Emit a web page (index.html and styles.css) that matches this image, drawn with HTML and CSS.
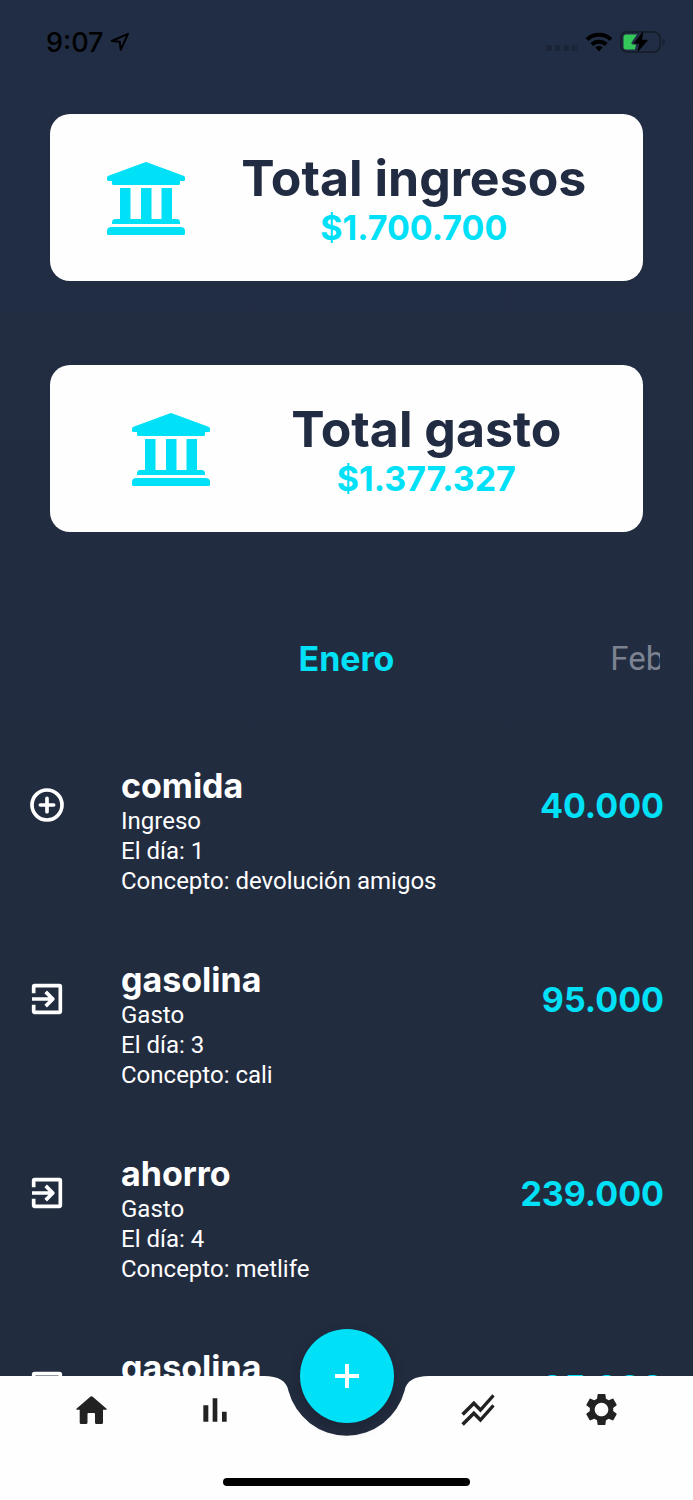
FILE: index.html
```html
<!DOCTYPE html>
<html lang="es">
<head>
<meta charset="utf-8">
<meta name="viewport" content="width=device-width, initial-scale=1">
<title>Finanzas</title>
<link rel="stylesheet" href="styles.css">
</head>
<body>
<svg class="defs" aria-hidden="true">
  <symbol id="bank" viewBox="0 0 78 73">
    <path d="M37.5.4a4 4 0 0 1 3 0L76.500 13.800Q78 14.400 78 16V17.500Q78 19 76.500 19H73V21.500Q73 23 71.500 23H6.500Q5 23 5 21.500V19H1.500Q0 19 0 17.500V16Q0 14.400 1.500 13.800Z"/>
    <path d="M13 26H23.500V57H34V26H44.500V57H54.500V26H65V57H70.500Q73 57.500 73 60V62H5V60Q5 57.500 7.500 57H13Z"/>
    <path d="M3.500 65H74.500Q78 65.500 78 69V71.500Q78 73 76.500 73H1.500Q0 73 0 71.500V69Q0 65.500 3.500 65Z"/>
  </symbol>
  <symbol id="exit" viewBox="0 0 24 24">
    <path fill="none" stroke="currentColor" stroke-width="2.200" stroke-linejoin="round" d="M4 8.500V4.600Q4 4 4.600 4H19.400Q20 4 20 4.600V19.400Q20 20 19.400 20H4.600Q4 20 4 19.400V15.500M3 12H15M11.200 7.700L15.500 12L11.200 16.300"/>
  </symbol>
</svg>
<div class="app">
  <header class="status">
    <div class="status-left">
      <span>9:07</span>
      <svg width="20" height="20" viewBox="0 0 20 20"><path fill="none" stroke="#000" stroke-width="2" stroke-linejoin="round" d="M1.800 9L18 1.800L10.700 17.800L9.800 9.800Z"/></svg>
    </div>
    <div class="status-right">
      <svg width="32" height="22" viewBox="0 0 32 22" fill="#1b2436"><rect y="14" width="6" height="6" rx="2"/><rect x="8.500" y="14" width="6" height="6" rx="2"/><rect x="17" y="14" width="6" height="6" rx="2"/><rect x="25.500" y="14" width="6" height="6" rx="2"/></svg>
      <svg width="28" height="22" viewBox="0 0 28 22"><g fill="none" stroke="#000" stroke-width="4"><path d="M2 8.500A17.500 17.500 0 0 1 26 8.500"/><path d="M6.700 13.500A10.800 10.800 0 0 1 21.300 13.500"/></g><path d="M10.300 16.500Q14 13.700 17.700 16.500L14 20.600Z"/></svg>
      <svg width="46" height="22" viewBox="0 0 46 22"><rect x="1" y="1" width="39" height="20" rx="6" fill="none" stroke="#171f2f" stroke-width="2"/><path fill="#171f2f" d="M42.500 7.500Q45 8.500 45 11T42.500 14.500Z"/><path fill="#34c759" d="M6 3.500H17L11.500 11.500Q11 13.500 13 13.500H16L15 18.500H6Q3.500 18.500 3.500 16V6Q3.500 3.500 6 3.500Z"/><path d="M23.500 0L14 11.800Q13.500 12.700 14.500 12.700H19.300L17.300 21.500L27.500 9.700Q28 8.700 27 8.700H22Z"/></svg>
    </div>
  </header>

  <section class="totals">
    <article class="card">
      <svg class="bank"><use href="#bank"/></svg>
      <div class="card-text"><h2>Total ingresos</h2><p>$1.700.700</p></div>
    </article>
    <article class="card">
      <svg class="bank"><use href="#bank"/></svg>
      <div class="card-text"><h2>Total gasto</h2><p>$1.377.327</p></div>
    </article>
  </section>

  <div class="months">
    <button class="month active" type="button">Enero</button>
    <button class="month" type="button">Febrero</button>
  </div>

  <ul class="list">
    <li class="row">
      <div class="row-icon"><svg viewBox="0 0 24 24"><g fill="none" stroke="currentColor" stroke-width="2.200"><circle cx="12" cy="12" r="9"/><path stroke-linecap="round" d="M12 8V16M8 12H16"/></g></svg></div>
      <div class="detail"><h3>comida</h3><p>Ingreso</p><p>El día: 1</p><p>Concepto: devolución amigos</p></div>
      <span class="amount">40.000</span>
    </li>
    <li class="row">
      <div class="row-icon"><svg><use href="#exit"/></svg></div>
      <div class="detail"><h3>gasolina</h3><p>Gasto</p><p>El día: 3</p><p>Concepto: cali</p></div>
      <span class="amount">95.000</span>
    </li>
    <li class="row">
      <div class="row-icon"><svg><use href="#exit"/></svg></div>
      <div class="detail"><h3>ahorro</h3><p>Gasto</p><p>El día: 4</p><p>Concepto: metlife</p></div>
      <span class="amount">239.000</span>
    </li>
    <li class="row">
      <div class="row-icon"><svg><use href="#exit"/></svg></div>
      <div class="detail"><h3>gasolina</h3></div>
      <span class="amount">95.000</span>
    </li>
  </ul>

  <nav class="nav">
    <div class="nav-bg">
      <div class="nav-side"></div>
      <svg class="notch" viewBox="0 0 181 124"><path fill="#fefefe" d="M0 0H8C22 0 31 5 32.500 15A60 60 0 0 0 148.500 15C150 5 159 0 173 0H181V124H0Z"/></svg>
      <div class="nav-side"></div>
    </div>
    <div class="tabs">
      <button type="button" aria-label="Inicio"><svg width="31" height="28" viewBox="0 0 31 28"><path d="M14.600.5Q15.500-.2 16.400.5L30.300 12.500Q31.300 13.800 30 13.800H27V26.500Q27 28 25.500 28H20.500Q19 28 19 26.500V18Q19 17 18 17H12.500Q11.500 17 11.500 18V26.500Q11.500 28 10 28H5Q3.700 28 3.700 26.500V13.800H1Q-.3 13.800.7 12.500Z"/></svg></button>
      <button type="button" aria-label="Estadísticas"><svg width="40" height="40" viewBox="0 0 24 24"><path d="M5 9.200h3V19H5zM10.600 5h2.800v14h-2.800zM16.200 13H19v6h-2.800z"/></svg></button>
      <button class="fab" type="button" aria-label="Agregar"><svg width="24" height="24" viewBox="0 0 24 24"><path fill="none" stroke="#fff" stroke-width="4" d="M12 0V24M0 12H24"/></svg></button>
      <button type="button" aria-label="Tendencias"><svg width="40" height="40" viewBox="0 0 24 24"><path d="M2 19.990l7.500-7.510 4 4 7.090-7.970L22 9.920l-8.500 9.560-4-4-6 6.010L2 19.990zm1.500-4.500l6-6.010 4 4L22 3.920l-1.410-1.410-7.090 7.970-4-4L2 13.990l1.500 1.500z"/></svg></button>
      <button type="button" aria-label="Ajustes"><svg width="39" height="39" viewBox="0 0 24 24"><path d="M19.140 12.940c.04-.3.060-.61.060-.94 0-.32-.02-.64-.07-.94l2.030-1.580c.18-.14.230-.41.120-.61l-1.920-3.320c-.12-.22-.37-.29-.59-.22l-2.390.96c-.5-.38-1.030-.7-1.620-.94l-.36-2.540c-.04-.24-.24-.41-.48-.41h-3.840c-.24 0-.43.170-.47.410l-.36 2.540c-.59.240-1.130.570-1.620.940l-2.390-.96c-.22-.08-.47 0-.59.220L2.740 8.870c-.12.210-.08.470.12.610l2.030 1.580c-.05.300-.09.630-.09.940s.02.640.07.940l-2.030 1.580c-.18.140-.23.410-.12.610l1.920 3.320c.12.220.37.290.59.220l2.390-.96c.5.380 1.030.7 1.620.94l.36 2.540c.05.240.24.410.48.410h3.840c.24 0 .44-.17.470-.41l.36-2.540c.59-.24 1.130-.56 1.620-.94l2.390.96c.22.080.47 0 .59-.22l1.920-3.320c.12-.22.070-.47-.12-.61l-2.010-1.580zM12 16.200c-2.310 0-4.200-1.890-4.200-4.200s1.890-4.200 4.200-4.200 4.200 1.890 4.200 4.200-1.890 4.200-4.200 4.200z"/></svg></button>
    </div>
    <div class="home-bar"></div>
  </nav>
</div>
</body>
</html>
```
FILE: styles.css
```css
* {
  box-sizing: border-box;
  margin: 0;
  padding: 0;
}

body {
  font-family: Inter, "Liberation Sans", sans-serif;
}

svg {
  display: block;
  flex: none;
}

button {
  border: 0;
  background: none;
  font: inherit;
  color: inherit;
  cursor: pointer;
}

.defs {
  position: absolute;
  width: 0;
  height: 0;
}

.app {
  position: relative;
  display: flex;
  flex-direction: column;
  height: 100vh;
  overflow: hidden;
  background: linear-gradient(#212d44, #222c3f 60%);
}

.status {
  flex: none;
  display: flex;
  align-items: center;
  justify-content: space-between;
  height: 84px;
  padding: 0 27px 0 46px;
  color: #000;
}

.status-left {
  display: flex;
  align-items: center;
  gap: 6px;
  font-size: 27px;
  font-weight: 500;
}

.status-right {
  display: flex;
  align-items: center;
  gap: 7px;
}

.totals {
  flex: none;
  display: flex;
  flex-direction: column;
  gap: 84px;
  padding: 30px 50px 0;
}

.card {
  display: flex;
  align-items: center;
  justify-content: space-evenly;
  padding: 35px 0 33px;
  border-radius: 20px;
  background: #fefefe;
}

.bank {
  width: 78px;
  height: 73px;
  fill: #00e0f7;
}

.card-text {
  text-align: center;
}

.card-text h2 {
  font-size: 50px;
  line-height: 59px;
  font-weight: 700;
  color: #212b41;
}

.card-text p {
  font-size: 34px;
  line-height: 40px;
  font-weight: 700;
  color: #00e0f7;
}

.months {
  flex: none;
  display: flex;
  margin: 96px 33px 77px;
  overflow: hidden;
}

.month {
  flex: 0 0 51%;
  height: 60px;
  font-family: Roboto, sans-serif;
  font-size: 33px;
  color: #7c8290;
}

.month.active {
  margin-left: calc(50% - 51% / 2);
  font-family: Inter, sans-serif;
  font-size: 34px;
  font-weight: 700;
  color: #00e0f7;
}

.list {
  flex: 1;
  min-height: 0;
  display: flex;
  flex-direction: column;
  gap: 63px;
  list-style: none;
  overflow: hidden;
}

.row {
  flex: none;
  display: flex;
  align-items: flex-start;
  padding: 0 29px 0 27px;
  color: #fff;
}

.row-icon {
  display: flex;
  align-items: center;
  height: 80px;
}

.row-icon svg {
  width: 40px;
  height: 40px;
}

.detail {
  flex: 1;
  padding: 1px 0 0 54px;
}

.detail h3 {
  font-size: 34px;
  line-height: 40px;
  font-weight: 700;
}

.detail p {
  font-family: Roboto, sans-serif;
  font-size: 24px;
  line-height: 30px;
}

.amount {
  font-size: 34px;
  line-height: 82px;
  font-weight: 700;
  color: #00e0f7;
}

.nav {
  position: absolute;
  right: 0;
  bottom: 0;
  left: 0;
  height: 124px;
  color: #222;
}

.nav-bg {
  position: absolute;
  inset: 0;
  display: flex;
}

.nav-side {
  flex: 1;
  background: #fefefe;
}

.notch {
  width: 181px;
  height: 124px;
}

.tabs {
  position: relative;
  display: grid;
  grid-template-columns: 1fr 1fr 138px 1fr 1fr;
  align-items: center;
  height: 67px;
  padding: 0 29px;
}

.tabs button {
  display: flex;
  align-items: center;
  justify-content: center;
}

.tabs svg {
  fill: currentColor;
}

.tabs .fab {
  align-self: start;
  justify-self: center;
  width: 94px;
  height: 94px;
  margin-top: -47px;
  border-radius: 50%;
  background: #00e0f7;
  box-shadow: 0 5px 14px rgba(0, 0, 0, 0.2);
}

.home-bar {
  position: relative;
  width: 247px;
  height: 8px;
  margin: 35px auto 0;
  border-radius: 4px;
  background: #000;
}
```
